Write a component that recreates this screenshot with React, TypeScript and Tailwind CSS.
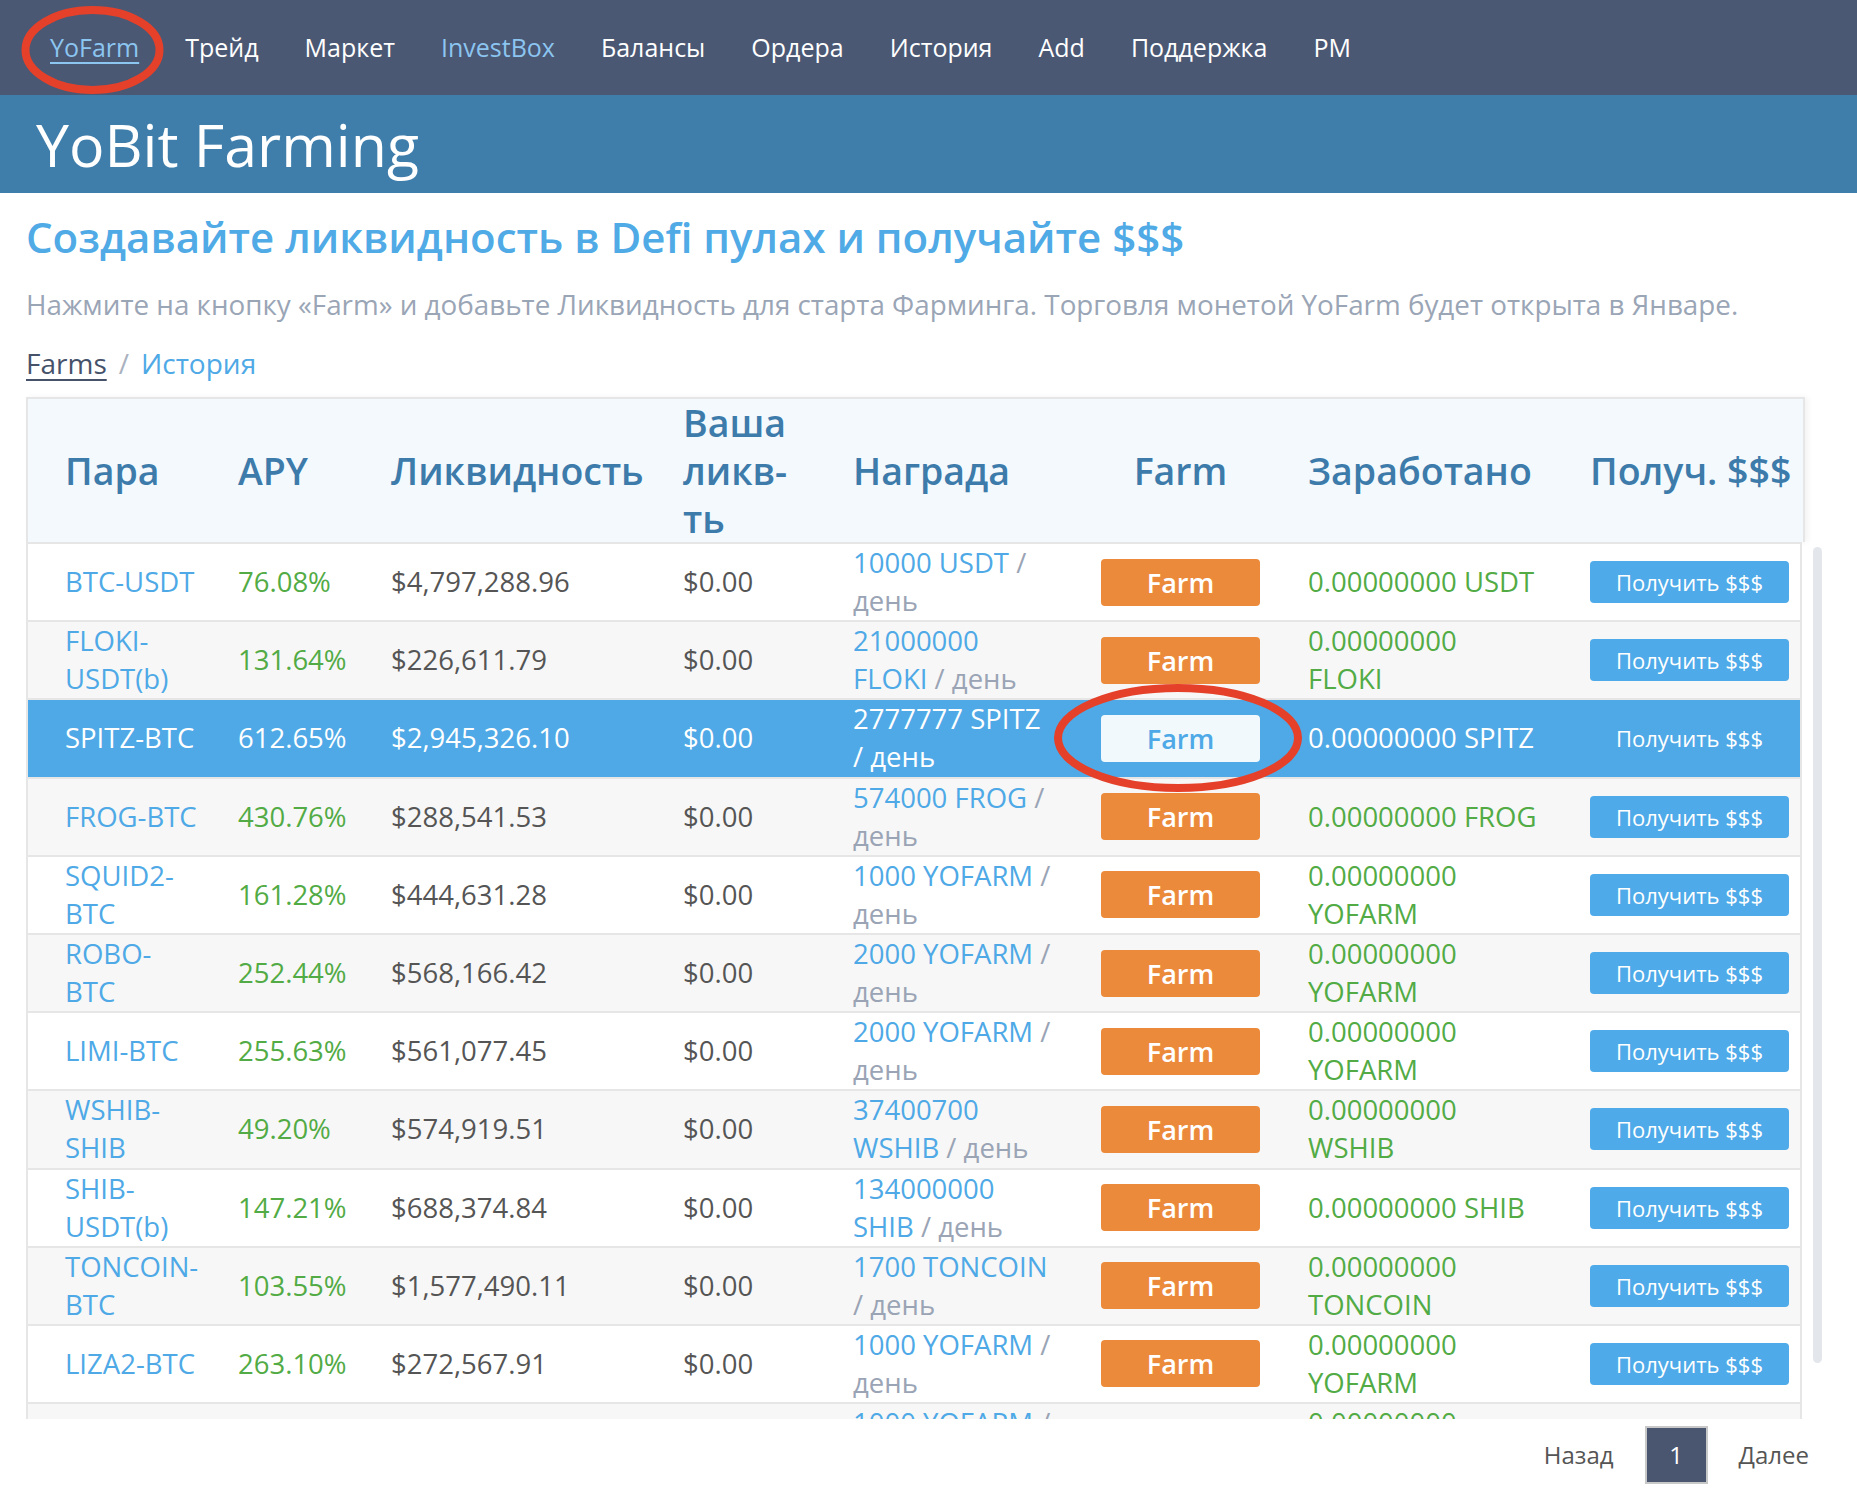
import React from 'react'

type Seg = { t: string; dim?: boolean }
type Row = {
  pair: string[]
  apy: string
  liq: string
  reward: Seg[][]
  earned: string[]
}

const NAV = ['YoFarm', 'Трейд', 'Маркет', 'InvestBox', 'Балансы', 'Ордера', 'История', 'Add', 'Поддержка', 'PM']

const ROWS: Row[] = [
  { pair: ['BTC-USDT'], apy: '76.08%', liq: '$4,797,288.96', reward: [[{ t: '10000 USDT' }, { t: ' /', dim: true }], [{ t: 'день', dim: true }]], earned: ['0.00000000 USDT'] },
  { pair: ['FLOKI-', 'USDT(b)'], apy: '131.64%', liq: '$226,611.79', reward: [[{ t: '21000000' }], [{ t: 'FLOKI' }, { t: ' / день', dim: true }]], earned: ['0.00000000', 'FLOKI'] },
  { pair: ['SPITZ-BTC'], apy: '612.65%', liq: '$2,945,326.10', reward: [[{ t: '2777777 SPITZ' }], [{ t: '/ день', dim: true }]], earned: ['0.00000000 SPITZ'] },
  { pair: ['FROG-BTC'], apy: '430.76%', liq: '$288,541.53', reward: [[{ t: '574000 FROG' }, { t: ' /', dim: true }], [{ t: 'день', dim: true }]], earned: ['0.00000000 FROG'] },
  { pair: ['SQUID2-', 'BTC'], apy: '161.28%', liq: '$444,631.28', reward: [[{ t: '1000 YOFARM' }, { t: ' /', dim: true }], [{ t: 'день', dim: true }]], earned: ['0.00000000', 'YOFARM'] },
  { pair: ['ROBO-', 'BTC'], apy: '252.44%', liq: '$568,166.42', reward: [[{ t: '2000 YOFARM' }, { t: ' /', dim: true }], [{ t: 'день', dim: true }]], earned: ['0.00000000', 'YOFARM'] },
  { pair: ['LIMI-BTC'], apy: '255.63%', liq: '$561,077.45', reward: [[{ t: '2000 YOFARM' }, { t: ' /', dim: true }], [{ t: 'день', dim: true }]], earned: ['0.00000000', 'YOFARM'] },
  { pair: ['WSHIB-', 'SHIB'], apy: '49.20%', liq: '$574,919.51', reward: [[{ t: '37400700' }], [{ t: 'WSHIB' }, { t: ' / день', dim: true }]], earned: ['0.00000000', 'WSHIB'] },
  { pair: ['SHIB-', 'USDT(b)'], apy: '147.21%', liq: '$688,374.84', reward: [[{ t: '134000000' }], [{ t: 'SHIB' }, { t: ' / день', dim: true }]], earned: ['0.00000000 SHIB'] },
  { pair: ['TONCOIN-', 'BTC'], apy: '103.55%', liq: '$1,577,490.11', reward: [[{ t: '1700 TONCOIN' }], [{ t: '/ день', dim: true }]], earned: ['0.00000000', 'TONCOIN'] },
  { pair: ['LIZA2-BTC'], apy: '263.10%', liq: '$272,567.91', reward: [[{ t: '1000 YOFARM' }, { t: ' /', dim: true }], [{ t: 'день', dim: true }]], earned: ['0.00000000', 'YOFARM'] },
  { pair: ['KISHU-BTC'], apy: '198.40%', liq: '$301,212.06', reward: [[{ t: '1000 YOFARM' }, { t: ' /', dim: true }], [{ t: 'день', dim: true }]], earned: ['0.00000000', 'YOFARM'] },
]

const GRID = 'grid grid-cols-[173px_153px_292px_170px_248px_207px_282px_1fr] items-center pl-[37px]'

function Lines({ lines, className }: { lines: string[]; className: string }) {
  return (
    <div className={className}>
      {lines.map((l) => (
        <div key={l} className="whitespace-nowrap">
          {l}
        </div>
      ))}
    </div>
  )
}

function FarmRow({ row, idx }: { row: Row; idx: number }) {
  const active = idx === 2
  const bg = active ? 'bg-[#4fa9e6]' : idx % 2 === 1 ? 'bg-[#f7f7f7]' : 'bg-white'
  return (
    <div className={`${GRID} h-[78.2px] shrink-0 border-t-2 border-[#e6e6e6] text-[27.5px] leading-[38px] ${bg}`}>
      <Lines lines={row.pair} className={active ? 'text-white' : 'text-[#4ea9e6]'} />
      <div className={active ? 'text-white' : 'text-[#52ab45]'}>{row.apy}</div>
      <div className={active ? 'text-white' : 'text-[#555]'}>{row.liq}</div>
      <div className={active ? 'text-white' : 'text-[#555]'}>$0.00</div>
      <div>
        {row.reward.map((line, i) => (
          <div key={i} className="whitespace-nowrap">
            {line.map((s, j) => (
              <span
                key={j}
                className={active ? 'text-white' : s.dim ? 'text-[#9aa4b5]' : 'text-[#4ea9e6]'}
              >
                {s.t}
              </span>
            ))}
          </div>
        ))}
      </div>
      <div>
        <button
          type="button"
          className={`w-[159px] h-[47px] rounded-[4px] text-[27px] font-semibold leading-none ${
            active ? 'bg-[#f2f9fd] text-[#4ea9e6]' : 'bg-[#ec8a3b] text-white'
          }`}
        >
          Farm
        </button>
      </div>
      <Lines lines={row.earned} className={active ? 'text-white' : 'text-[#52ab45]'} />
      <div>
        <button
          type="button"
          className={`w-[199px] h-[42px] rounded-[4px] text-[22px] leading-none text-white ${
            active ? 'bg-transparent' : 'bg-[#4eaae8]'
          }`}
        >
          Получить $$$
        </button>
      </div>
    </div>
  )
}

export default function App() {
  return (
    <div className="relative w-[1857px] h-[1495px] bg-white font-['Open_Sans',sans-serif] overflow-hidden">
      {/* top nav */}
      <nav className="h-[95px] bg-[#4a5874] flex items-center pl-[50px] gap-[46px] text-[25px]">
        {NAV.map((n, i) => (
          <span
            key={n}
            className={
              i === 0
                ? 'text-[#8cc5f0] underline underline-offset-[5px] decoration-[2px]'
                : n === 'InvestBox'
                  ? 'text-[#8cc5f0]'
                  : 'text-white'
            }
          >
            {n}
          </span>
        ))}
      </nav>

      <div className="h-[98px] bg-[#3f7eab] flex items-center pl-[36px]">
        <h1 className="text-white text-[59px] leading-none">YoBit Farming</h1>
      </div>

      <div className="px-[26px]">
        <h2 className="mt-[20px] text-[42px] leading-[48px] font-semibold text-[#4faae6]">
          Создавайте ликвидность в Defi пулах и получайте $$$
        </h2>
        <p className="mt-[25px] text-[27.8px] leading-[36px] text-[#9aa5b6]">
          Нажмите на кнопку «Farm» и добавьте Ликвидность для старта Фарминга. Торговля монетой YoFarm будет
          открыта в Январе.
        </p>
        <div className="mt-[23px] text-[28px] leading-[36px] flex gap-[12px]">
          <span className="text-[#46526a] underline underline-offset-[5px] decoration-[2px]">Farms</span>
          <span className="text-[#aab2bf]">/</span>
          <span className="text-[#4ea9e6]">История</span>
        </div>

        {/* table */}
        <div className="mt-[16px]">
          <div
            className={`${GRID} w-[1779px] h-[145px] border-2 border-b-0 border-[#e6e6e6] bg-[#f3f9fd] text-[37.5px] font-semibold text-[#3d7bab] shadow-[3px_0_6px_rgba(0,0,0,0.05)]`}
          >
            <div>Пара</div>
            <div>APY</div>
            <div>Ликвидность</div>
            <div className="leading-[48px]">
              <div>Ваша</div>
              <div>ликв-</div>
              <div>ть</div>
            </div>
            <div>Награда</div>
            <div className="w-[159px] text-center">Farm</div>
            <div>Заработано</div>
            <div className="whitespace-nowrap">Получ. $$$</div>
          </div>
          <div className="flex h-[877px] overflow-hidden">
            <div className="w-[1776px] border-x-2 border-[#e6e6e6] flex flex-col">
              {ROWS.map((r, i) => (
                <FarmRow key={r.pair.join('')} row={r} idx={i} />
              ))}
            </div>
            <div className="ml-[11px] mt-[5px] w-[9px] h-[816px] rounded-full bg-[#e3e7ec]" />
          </div>
        </div>

        {/* pagination */}
        <div className="mt-[7px] flex items-center justify-end pr-[22px] gap-[31px] text-[24px] text-[#555]">
          <span>Назад</span>
          <span className="w-[63px] h-[58px] flex items-center justify-center border-2 border-[#c8c8c8] bg-[#4a5670] text-white">
            1
          </span>
          <span>Далее</span>
        </div>
      </div>

      {/* red annotation marks */}
      <svg className="absolute inset-0 pointer-events-none" width="1857" height="1495" viewBox="0 0 1857 1495">
        <ellipse cx="92.5" cy="50" rx="67" ry="40" fill="none" stroke="#e5402a" strokeWidth="8" />
        <ellipse cx="1178" cy="738" rx="120" ry="50" fill="none" stroke="#e5402a" strokeWidth="8" />
      </svg>
    </div>
  )
}
